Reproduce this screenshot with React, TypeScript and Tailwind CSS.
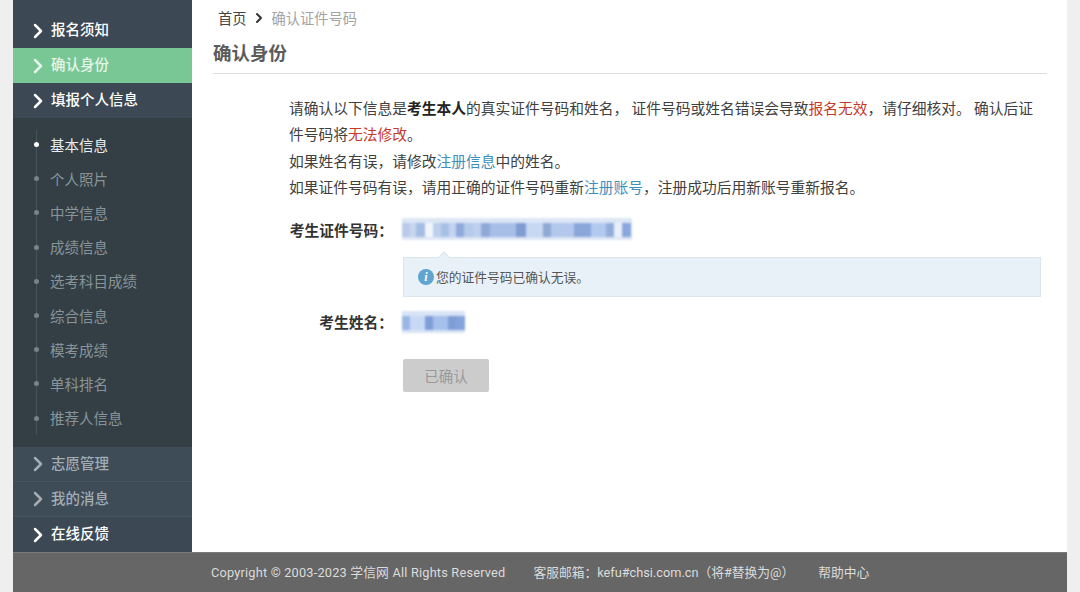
import React from 'react';
import { ChevronRight } from 'lucide-react';

const subItems = ['基本信息', '个人照片', '中学信息', '成绩信息', '选考科目成绩', '综合信息', '模考成绩', '单科排名', '推荐人信息'];

function NavRow({ label, first, dim, active }: { label: string; first?: boolean; dim?: boolean; active?: boolean }) {
  const color = active ? 'text-[#e4f5ea] bg-[#79c795]' : dim ? 'text-[#a3adb3] bg-[#3e4c58]' : 'text-white bg-[#3c4954]';
  return (
    <div className={`flex items-center pl-[13px] ${first ? 'h-[48px] pt-[13px]' : 'h-[35px]'} ${color} ${dim ? 'border-b border-[#465562]' : ''}`}>
      <ChevronRight className="w-[24px] h-[24px] shrink-0" strokeWidth={2.5} />
      <span className="ml-[1px] mb-[3px] text-[14.5px] font-medium">{label}</span>
    </div>
  );
}

// blurred-out personal data in the form: [width, colour] per column
function Mosaic({ columns, w, h, bandY, bandH, tint }: { columns: [number, string][]; w: number; h: number; bandY: number; bandH: number; tint: string }) {
  let x = 0;
  return (
    <svg width={w} height={h} viewBox={`0 0 ${w} ${h}`} className="blur-[0.8px]">
      <rect x={0} y={bandY - 5} width={w} height={bandH + 8} fill={tint} />
      {columns.map(([cw, fill], i) => {
        const rect = <rect key={i} x={x} y={bandY} width={cw} height={bandH} fill={fill} />;
        x += cw;
        return rect;
      })}
    </svg>
  );
}

const idColumns: [number, string][] = [
  [8, '#b9cbe9'], [6, '#c7d6ef'], [9, '#a5bce3'], [8, '#f2f6fc'], [8, '#bdcfec'], [8, '#a9c0e6'],
  [7, '#c3d4f0'], [8, '#8eaadb'], [9, '#b5c9ea'], [8, '#bdd0ee'], [9, '#8faad9'], [26, '#a7bee6'],
  [10, '#7f9dd0'], [17, '#c6d8f2'], [8, '#8fa9d6'], [23, '#b3c8ec'], [17, '#8aa7da'], [15, '#b3caef'],
  [8, '#93add9'], [8, '#eaf0fa'], [9, '#8aa7dd'],
];

const nameColumns: [number, string][] = [
  [8, '#9ab6e4'], [15, '#c7d9f4'], [8, '#7e9ed8'], [15, '#a5c0ea'], [8, '#7f9dd7'], [9, '#85a3dc'],
];

export default function App() {
  return (
    <div className="h-[592px] w-[1080px] overflow-hidden bg-[#efefef] flex flex-col font-['Noto_Sans_CJK_SC',sans-serif]">
      <div className="flex flex-1 mx-[13px]">
        {/* Sidebar */}
        <aside className="w-[179px] shrink-0 flex flex-col">
          <NavRow label="报名须知" first />
          <NavRow label="确认身份" active />
          <NavRow label="填报个人信息" />
          <div className="relative h-[329px] bg-[#333f45] pt-[9.5px]">
            <div className="absolute left-[23px] top-[12px] bottom-[12px] w-px bg-[#465358]" />
            {subItems.map((item, i) => (
              <div key={item} className={`relative flex items-center h-[34.2px] pl-[37px] text-[14.5px] ${i === 0 ? 'text-[#e8ecee]' : 'text-[#88949a]'}`}>
                <span className={`absolute left-[21px] w-[5px] h-[5px] rounded-full ${i === 0 ? 'bg-white' : 'bg-[#75848a]'}`} />
                {item}
              </div>
            ))}
          </div>
          <NavRow label="志愿管理" dim />
          <NavRow label="我的消息" dim />
          <NavRow label="在线反馈" />
        </aside>

        {/* Main */}
        <main className="flex-1 min-w-0 bg-white pl-[21px] pr-[20px]">
          <div className="flex items-center h-[36px] pl-[5px] text-[14.25px]">
            <span className="text-[#444]">首页</span>
            <ChevronRight className="w-4 h-4 ml-[4px] text-[#333]" strokeWidth={3} />
            <span className="ml-[5px] text-[#a3a3a3]">确认证件号码</span>
          </div>
          <h1 className="h-[38px] border-b border-[#dedede] text-[18.5px] font-bold leading-[32px] text-[#5c5c5c]">确认身份</h1>

          <div className="pl-[76px] pr-[6px] pt-[21px]">
            <div className="text-[14.75px] leading-[26.4px] text-[#404040]">
              <p>
                请确认以下信息是<b className="font-bold text-[#222]">考生本人</b>的真实证件号码和姓名， 证件号码或姓名错误会导致<span className="text-[#c6392b]">报名无效</span>，请仔细核对。 确认后证件号码将<span className="text-[#c6392b]">无法修改</span>。
              </p>
              <p>如果姓名有误，请修改<span className="text-[#3d90bd]">注册信息</span>中的姓名。</p>
              <p>如果证件号码有误，请用正确的证件号码重新<span className="text-[#3d90bd]">注册账号</span>，注册成功后用新账号重新报名。</p>
            </div>

            <div className="flex items-center mt-[16.4px] h-[26px]">
              <label className="w-[104px] shrink-0 text-right text-[14.75px] font-bold text-[#333]">考生证件号码：</label>
              <div className="ml-[9px] flex"><Mosaic columns={idColumns} w={230} h={24} bandY={5} bandH={14} tint="#dde6f5" /></div>
            </div>

            <div className="relative ml-[114px] mt-[14px] h-[40px] w-[638px] flex items-center pl-[14px] pb-[1px] bg-[#e9f1f8] border border-[#d9e5ef] text-[12.75px] text-[#555]">
              <span className="absolute -top-[5px] left-[36px] w-[8px] h-[8px] rotate-45 bg-[#e9f1f8] border-l border-t border-[#d9e5ef]" />
              <span className="w-[16px] h-[16px] mr-[2px] rounded-full bg-[#5fa5cf] text-white flex items-center justify-center text-[12px] font-bold italic font-['Liberation_Serif',serif]">i</span>
              您的证件号码已确认无误。
            </div>

            <div className="flex items-center mt-[12px] h-[26px]">
              <label className="w-[104px] shrink-0 text-right text-[14.75px] font-bold text-[#333]">考生姓名：</label>
              <div className="ml-[9px] flex"><Mosaic columns={nameColumns} w={63} h={28} bandY={8} bandH={14} tint="#d9e4f6" /></div>
            </div>

            <button className="block ml-[114px] mt-[24px] w-[86px] h-[33px] rounded-[2px] bg-[#cccccc] text-[14.5px] text-[#999]">已确认</button>
          </div>
        </main>
      </div>

      {/* Footer */}
      <footer className="mx-[13px] h-[40px] bg-[#666666] border-t border-[#7a7a7a] flex items-center text-[12.75px] text-[#dcdcdc] font-['Roboto','Noto_Sans_CJK_SC',sans-serif]">
        <span className="ml-[198px] tracking-[0.2px]">Copyright © 2003-2023 学信网 All Rights Reserved</span>
        <span className="ml-[28px]">客服邮箱：kefu#chsi.com.cn（将#替换为@）</span>
        <span className="ml-[24px]">帮助中心</span>
      </footer>
    </div>
  );
}
